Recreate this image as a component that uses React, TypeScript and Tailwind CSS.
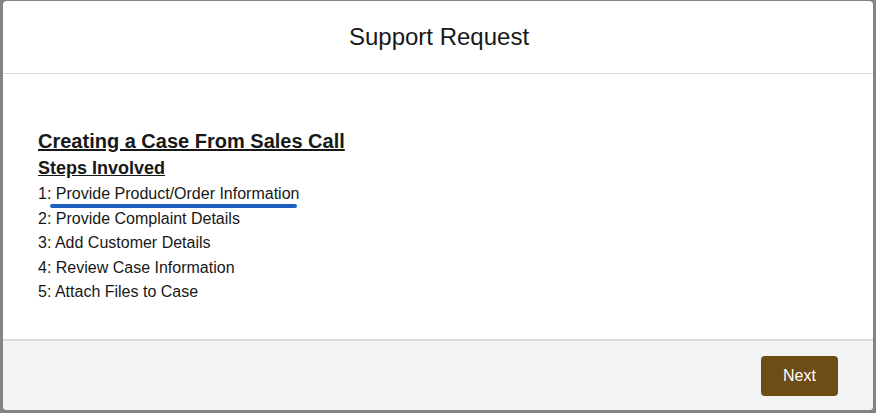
import React from 'react';

const steps = [
  'Provide Product/Order Information',
  'Provide Complaint Details',
  'Add Customer Details',
  'Review Case Information',
  'Attach Files to Case',
];

export default function App() {
  return (
    <div
      className="w-[876px] h-[413px] bg-[#848484] pt-px pl-[3px] overflow-hidden"
      style={{ fontFamily: '"Liberation Sans", Arial, sans-serif' }}
    >
      <div className="w-[870px] h-[409px] bg-white rounded-[4px] flex flex-col overflow-hidden">
        {/* Header */}
        <div className="h-[73px] border-b border-[#dddbda] flex items-center justify-center">
          <h2 className="text-[24px] text-[#181818] leading-none pl-[2px]">Support Request</h2>
        </div>

        {/* Body */}
        <div className="flex-1 pl-[35px] pt-[55px]">
          <div className="text-[20px] font-bold underline text-[#181818] leading-[24px]">
            Creating a Case From Sales Call
          </div>
          <div className="text-[18px] font-bold underline text-[#181818] leading-[22px] mt-[4px]">
            Steps Involved
          </div>
          <ul className="mt-[3px] text-[16px] text-[#181818]">
            {steps.map((s, i) => (
              <li key={i} className="leading-[24.6px] relative">
                {i + 1}: {s}
                {i === 0 && (
                  <span className="absolute left-[12px] top-[22px] w-[247px] h-[4px] rounded-full bg-[#1d5fbd]" />
                )}
              </li>
            ))}
          </ul>
        </div>

        {/* Footer */}
        <div className="h-[71px] bg-[#f3f3f3] border-t-2 border-[#dddbda] flex items-center justify-end pr-[35px]">
          <button className="w-[77px] h-[40px] rounded-[4px] bg-[#6d4c16] text-white text-[16px]">
            Next
          </button>
        </div>
      </div>
    </div>
  );
}
